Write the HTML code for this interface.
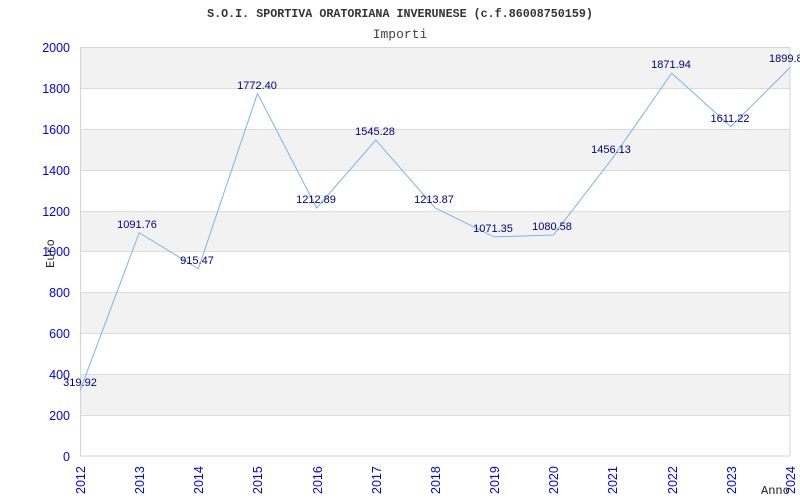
<!DOCTYPE html>
<html><head><style>
html,body{margin:0;padding:0;background:#fff;width:800px;height:500px;overflow:hidden}
</style></head><body>
<svg width="800" height="500" xmlns="http://www.w3.org/2000/svg" font-family="Liberation Sans, sans-serif">
<text x="400" y="17" text-anchor="middle" font-family="Liberation Mono, monospace" font-weight="bold" font-size="11.7" fill="#333">S.O.I. SPORTIVA ORATORIANA INVERUNESE (c.f.86008750159)</text>
<text x="400" y="38" text-anchor="middle" font-family="Liberation Mono, monospace" font-size="13" fill="#444">Importi</text>
<g fill="#f2f2f2">
<rect x="80" y="47" width="710" height="41"/>
<rect x="80" y="129" width="710" height="41"/>
<rect x="80" y="211" width="710" height="41"/>
<rect x="80" y="292" width="710" height="41"/>
<rect x="80" y="374" width="710" height="41"/>
</g>
<g stroke="#dcdcdc" stroke-width="1">
<line x1="80" y1="88.5" x2="790" y2="88.5"/><line x1="80" y1="129.5" x2="790" y2="129.5"/>
<line x1="80" y1="170.5" x2="790" y2="170.5"/><line x1="80" y1="211.5" x2="790" y2="211.5"/>
<line x1="80" y1="251.5" x2="790" y2="251.5"/><line x1="80" y1="292.5" x2="790" y2="292.5"/>
<line x1="80" y1="333.5" x2="790" y2="333.5"/><line x1="80" y1="374.5" x2="790" y2="374.5"/>
<line x1="80" y1="415.5" x2="790" y2="415.5"/>
<rect x="80.5" y="47.5" width="709.5" height="408.5" fill="none" stroke="#d4d4d4"/>
</g>
<g fill="#0000ee" font-size="12.5" text-anchor="end">
<text x="70" y="52">2000</text><text x="70" y="93">1800</text><text x="70" y="134">1600</text>
<text x="70" y="175">1400</text><text x="70" y="216">1200</text><text x="70" y="256">1000</text>
<text x="70" y="297">800</text><text x="70" y="338">600</text><text x="70" y="379">400</text>
<text x="70" y="420">200</text><text x="70" y="461">0</text>
</g>
<g fill="#0000ee" font-size="12.5">
<text transform="translate(85,494) rotate(-90)">2012</text>
<text transform="translate(144,494) rotate(-90)">2013</text>
<text transform="translate(203,494) rotate(-90)">2014</text>
<text transform="translate(262,494) rotate(-90)">2015</text>
<text transform="translate(322,494) rotate(-90)">2016</text>
<text transform="translate(381,494) rotate(-90)">2017</text>
<text transform="translate(440,494) rotate(-90)">2018</text>
<text transform="translate(499,494) rotate(-90)">2019</text>
<text transform="translate(558,494) rotate(-90)">2020</text>
<text transform="translate(617,494) rotate(-90)">2021</text>
<text transform="translate(677,494) rotate(-90)">2022</text>
<text transform="translate(736,494) rotate(-90)">2023</text>
<text transform="translate(795,494) rotate(-90)">2024</text>
</g>
<text transform="translate(54,268) rotate(-90)" font-family="Liberation Mono, monospace" font-size="12" fill="#222">Euro</text>
<text x="761" y="494" font-family="Liberation Mono, monospace" font-size="12" fill="#222">Anno</text>
<polyline fill="none" stroke="#7ab4f0" stroke-width="1" points="80,390.6 139.2,232.7 198.3,268.8 257.5,93.5 316.7,208 375.8,140 435,207.8 494.2,236.9 553.3,235 612.5,158.2 671.7,73.2 730.8,126.5 790,67.5"/>
<g fill="#000080" font-size="11" text-anchor="middle">
<text x="80" y="386">319.92</text>
<text x="137" y="228">1091.76</text>
<text x="197" y="264">915.47</text>
<text x="257" y="89">1772.40</text>
<text x="316" y="203">1212.89</text>
<text x="375" y="135">1545.28</text>
<text x="434" y="203">1213.87</text>
<text x="493" y="232">1071.35</text>
<text x="552" y="230">1080.58</text>
<text x="611" y="153">1456.13</text>
<text x="671" y="68">1871.94</text>
<text x="730" y="122">1611.22</text>
<text x="769" y="62" text-anchor="start">1899.8</text>
</g>
</svg>
</body></html>
